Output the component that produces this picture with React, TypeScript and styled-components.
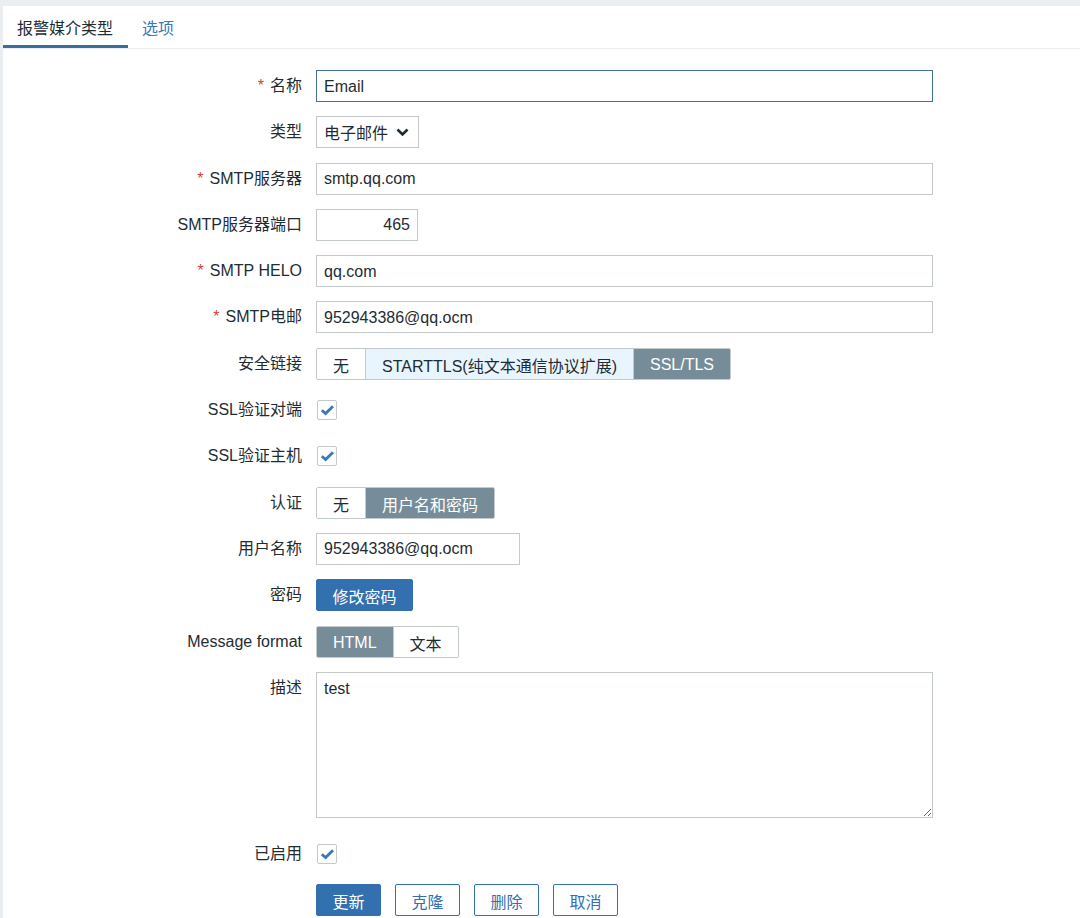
import React from "react";
import styled, { createGlobalStyle, css } from "styled-components";

const GlobalStyle = createGlobalStyle`
  body {
    margin: 0;
    background: #ebeef0;
    font-family: "Liberation Sans", "Noto Sans CJK SC", sans-serif;
    color: #1f2c33;
  }
`;

const blue = "#3270b0";
const line = "#c4c9cc";

const Panel = styled.div`
  margin: 6px 0 0 3px;
  background: #fff;
  min-height: 912px;
`;

const Tabs = styled.div`
  display: flex;
  height: 42px;
  border-bottom: 1px solid #ebeef0;
`;

const Tab = styled.div<{ $active?: boolean }>`
  display: flex;
  align-items: center;
  padding: 0 15px 0 14px;
  font-size: 16px;
  color: ${(p) => (p.$active ? "#1f2c33" : "#3a78b8")};
  border-bottom: 3px solid ${(p) => (p.$active ? "#3a6c9c" : "transparent")};
  padding-top: 3px;
`;

const Form = styled.div`
  display: grid;
  grid-template-columns: 299px 1fr;
  column-gap: 14px;
  row-gap: 14.3px;
  padding-top: 21px;
  align-items: center;
  font-size: 16px;
`;

const Label = styled.div<{ $top?: boolean }>`
  text-align: right;
  line-height: 32px;
  white-space: nowrap;
  align-self: ${(p) => (p.$top ? "start" : "center")};
`;

const Req = styled.span`
  color: #d23f3f;
  margin-right: 6px;
`;

const Field = styled.div`
  display: flex;
  align-items: center;
  min-height: 32px;
`;

const boxBase = css`
  box-sizing: border-box;
  height: 32px;
  border: 1px solid ${line};
  border-radius: 0;
  font-family: inherit;
  font-size: 16px;
  color: #1f2c33;
  background: #fff;
  outline: none;
`;

const TextInput = styled.input<{ $w?: number; $focus?: boolean; $right?: boolean }>`
  ${boxBase}
  width: ${(p) => p.$w ?? 617}px;
  padding: 1px 7px 0;
  text-align: ${(p) => (p.$right ? "right" : "left")};
  ${(p) =>
    p.$focus &&
    css`
      border-color: #41719c;
    `}
`;

const SelectBox = styled.div`
  ${boxBase}
  width: 103px;
  display: flex;
  align-items: center;
  justify-content: space-between;
  padding: 0 9px 0 7px;
`;

const Segmented = styled.div`
  display: flex;
  height: 32px;
  box-sizing: border-box;
  border: 1px solid ${line};
  border-radius: 2px;
  overflow: hidden;
`;

const Seg = styled.div<{ $state?: "active" | "hover" }>`
  display: flex;
  align-items: center;
  padding: 2px 16px 0;
  white-space: nowrap;
  background: ${(p) =>
    p.$state === "active" ? "#768d99" : p.$state === "hover" ? "#e8f5ff" : "#fff"};
  color: ${(p) => (p.$state === "active" ? "#fff" : "#1f2c33")};
  & + & {
    border-left: 1px solid ${line};
  }
`;

const CheckBox = styled.div`
  box-sizing: border-box;
  width: 20px;
  height: 20px;
  margin-left: 1px;
  border: 1px solid ${line};
  border-radius: 2px;
  display: flex;
  align-items: center;
  justify-content: center;
  background: #fff;
`;

const Button = styled.button<{ $primary?: boolean }>`
  box-sizing: border-box;
  height: 32px;
  padding: 2px 15.5px 0;
  border-radius: 2px;
  font-family: inherit;
  font-size: 16px;
  border: 1px solid ${blue};
  background: ${(p) => (p.$primary ? blue : "#fff")};
  color: ${(p) => (p.$primary ? "#fff" : blue)};
`;

const TextArea = styled.textarea`
  ${boxBase}
  display: block;
  width: 617px;
  height: 146px;
  padding: 7px 7px;
  margin-bottom: 6px;
  resize: both;
`;

const ButtonRow = styled.div`
  display: flex;
  gap: 14px;
`;

const Check = () => (
  <CheckBox>
    <svg width="15" height="12" viewBox="0 0 15 12">
      <path d="M1.8 6.2 L5.6 9.6 L13 2.2" fill="none" stroke="#3a78b8" strokeWidth="2.8" />
    </svg>
  </CheckBox>
);

const Chevron = () => (
  <svg width="13" height="9" viewBox="0 0 13 9">
    <path d="M1.5 1.5 L6.5 6.5 L11.5 1.5" fill="none" stroke="#1f2c33" strokeWidth="2.6" />
  </svg>
);

export default function App() {
  return (
    <>
      <GlobalStyle />
      <Panel>
        <Tabs>
          <Tab $active>报警媒介类型</Tab>
          <Tab>选项</Tab>
        </Tabs>
        <Form>
          <Label>
            <Req>*</Req>名称
          </Label>
          <Field>
            <TextInput $focus defaultValue="Email" />
          </Field>

          <Label>类型</Label>
          <Field>
            <SelectBox>
              <span>电子邮件</span>
              <Chevron />
            </SelectBox>
          </Field>

          <Label>
            <Req>*</Req>SMTP服务器
          </Label>
          <Field>
            <TextInput defaultValue="smtp.qq.com" />
          </Field>

          <Label>SMTP服务器端口</Label>
          <Field>
            <TextInput $w={102} $right defaultValue="465" />
          </Field>

          <Label>
            <Req>*</Req>SMTP HELO
          </Label>
          <Field>
            <TextInput defaultValue="qq.com" />
          </Field>

          <Label>
            <Req>*</Req>SMTP电邮
          </Label>
          <Field>
            <TextInput defaultValue="952943386@qq.ocm" />
          </Field>

          <Label>安全链接</Label>
          <Field>
            <Segmented>
              <Seg>无</Seg>
              <Seg $state="hover">STARTTLS(纯文本通信协议扩展)</Seg>
              <Seg $state="active">SSL/TLS</Seg>
            </Segmented>
          </Field>

          <Label>SSL验证对端</Label>
          <Field>
            <Check />
          </Field>

          <Label>SSL验证主机</Label>
          <Field>
            <Check />
          </Field>

          <Label>认证</Label>
          <Field>
            <Segmented>
              <Seg>无</Seg>
              <Seg $state="active">用户名和密码</Seg>
            </Segmented>
          </Field>

          <Label>用户名称</Label>
          <Field>
            <TextInput $w={204} defaultValue="952943386@qq.ocm" />
          </Field>

          <Label>密码</Label>
          <Field>
            <Button $primary>修改密码</Button>
          </Field>

          <Label>Message format</Label>
          <Field>
            <Segmented>
              <Seg $state="active">HTML</Seg>
              <Seg>文本</Seg>
            </Segmented>
          </Field>

          <Label $top>描述</Label>
          <Field>
            <TextArea defaultValue="test" />
          </Field>

          <Label>已启用</Label>
          <Field>
            <Check />
          </Field>

          <div />
          <ButtonRow>
            <Button $primary>更新</Button>
            <Button>克隆</Button>
            <Button>删除</Button>
            <Button>取消</Button>
          </ButtonRow>
        </Form>
      </Panel>
    </>
  );
}
